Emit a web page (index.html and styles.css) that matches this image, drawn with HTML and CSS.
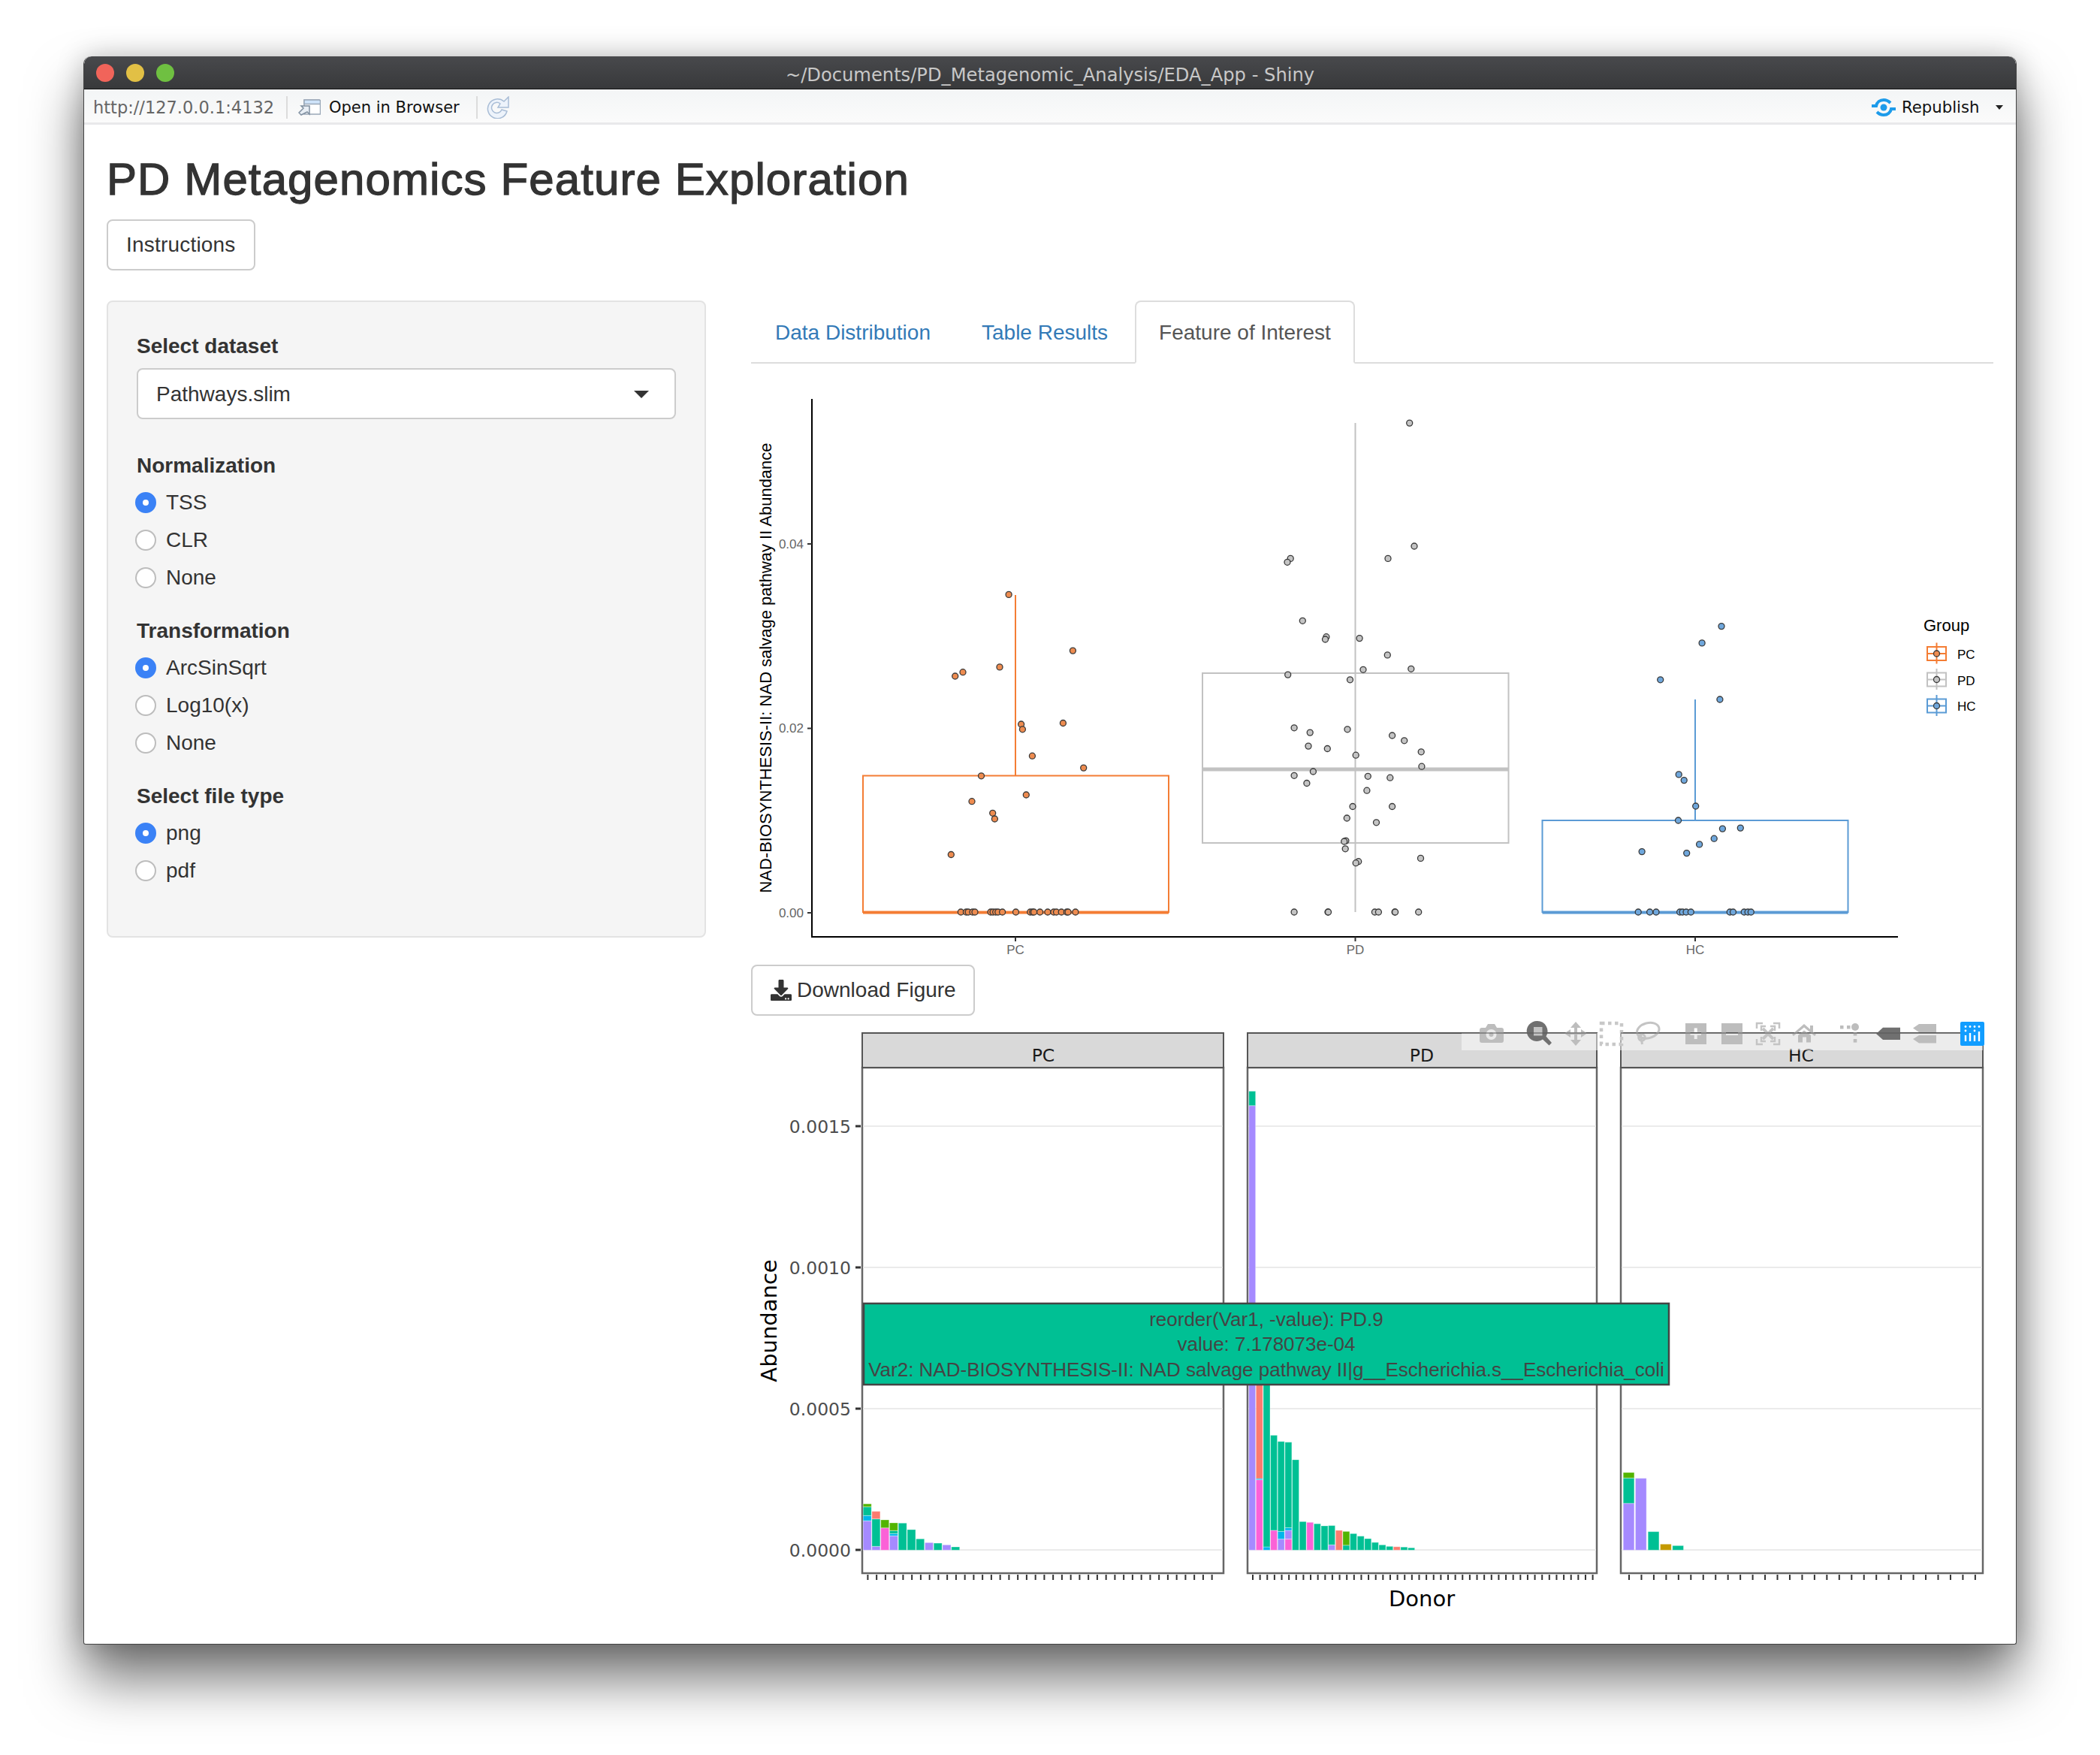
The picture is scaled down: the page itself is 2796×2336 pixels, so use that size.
FILE: index.html
```html
<!DOCTYPE html>
<html lang="en">
<head>
<meta charset="utf-8">
<title>PD Metagenomics Feature Exploration</title>
<link rel="stylesheet" href="styles.css">
</head>
<body>
<div class="window">
  <header class="titlebar">
    <div class="lights"><span class="light red"></span><span class="light yellow"></span><span class="light green"></span></div>
    <div class="wintitle">~/Documents/PD_Metagenomic_Analysis/EDA_App - Shiny</div>
  </header>
  <nav class="toolbar">
    <span class="url">http://127.0.0.1:4132</span>
    <span class="sep"></span>
    <svg class="ic-open" viewBox="0 0 30 22"><path class="ic-open-doc" d="M8 1h20a1.500 1.500 0 0 1 1.500 1.500V20H8z"/><path class="ic-open-top" d="M8 1h20a1.500 1.500 0 0 1 1.500 1.500V6.500H8z"/><path class="ic-open-arrow" d="M4 21L1 18l6-6-3-3h11v11l-3-3z"/></svg>
    <span class="openb">Open in Browser</span>
    <span class="sep"></span>
    <svg class="ic-refresh" viewBox="0 0 30 30"><path class="ic-refresh-p" d="M23 7A13 13 0 1 0 27 20L20 18A7 7 0 1 1 18 10L15 15H29V1Z"/></svg>
    <span class="spacer"></span>
    <svg class="ic-pub" viewBox="0 0 32 24"><circle class="ic-pub-dot" cx="16" cy="12" r="4.500"/><path class="ic-pub-line" d="M0 10h6c1-5 5-8 10-8 4 0 7 2 9 4"/><path class="ic-pub-line" d="M32 14h-6c-1 5-5 8-10 8-4 0-7-2-9-4"/></svg>
    <span class="republish">Republish</span>
    <span class="pubcaret"></span>
  </nav>

  <main class="app">
    <h1 class="apptitle">PD Metagenomics Feature Exploration</h1>
    <button class="btn" type="button">Instructions</button>
    <div class="columns">
      <aside class="well">
        <div class="group group-select">
          <div class="label">Select dataset</div>
          <div class="select"><span>Pathways.slim</span><span class="caret"></span></div>
        </div>
        <div class="group">
          <div class="label">Normalization</div>
          <label class="radio"><input type="radio" name="norm" checked><span>TSS</span></label>
          <label class="radio"><input type="radio" name="norm"><span>CLR</span></label>
          <label class="radio"><input type="radio" name="norm"><span>None</span></label>
        </div>
        <div class="group">
          <div class="label">Transformation</div>
          <label class="radio"><input type="radio" name="trans" checked><span>ArcSinSqrt</span></label>
          <label class="radio"><input type="radio" name="trans"><span>Log10(x)</span></label>
          <label class="radio"><input type="radio" name="trans"><span>None</span></label>
        </div>
        <div class="group group-last">
          <div class="label">Select file type</div>
          <label class="radio"><input type="radio" name="ft" checked><span>png</span></label>
          <label class="radio"><input type="radio" name="ft"><span>pdf</span></label>
        </div>
      </aside>

      <section class="content">
        <ul class="tabs">
          <li class="tab"><a>Data Distribution</a></li>
          <li class="tab"><a>Table Results</a></li>
          <li class="tab active"><a>Feature of Interest</a></li>
        </ul>

        <svg class="plot1" viewBox="1000 484 1656 800">
          <text class="p1-title" transform="translate(1027 889) rotate(-90)" text-anchor="middle">NAD-BIOSYNTHESIS-II: NAD salvage pathway II Abundance</text>
          <g class="p1-tl" text-anchor="end">
            <text x="1070" y="730">0.04</text>
            <text x="1070" y="975">0.02</text>
            <text x="1070" y="1221">0.00</text>
          </g>
          <g class="p1-tl" text-anchor="middle">
            <text x="1352" y="1270">PC</text>
            <text x="1804.500" y="1270">PD</text>
            <text x="2257" y="1270">HC</text>
          </g>
          <path class="p1-axis" d="M1081 531V1247H2527"/>
          <path class="p1-tick" d="M1075 724h6M1075 969.500h6M1075 1215h6M1352 1247v6M1804.500 1247v6M2257 1247v6"/>

          <g class="box-pc">
            <path class="whisk" d="M1352 792V1032"/>
            <rect class="bx" x="1149" y="1032.500" width="407" height="181.500"/>
            <path class="med" d="M1149 1214.500H1556"/>
          </g>
          <g class="pts-pc">
            <circle cx="1343.100" cy="791.400" r="4"/><circle cx="1428.400" cy="866.100" r="4"/><circle cx="1282" cy="894.700" r="4"/><circle cx="1271.700" cy="900" r="4"/><circle cx="1331" cy="887.900" r="4"/><circle cx="1359.600" cy="964" r="4"/><circle cx="1361.400" cy="970.800" r="4"/><circle cx="1415.400" cy="962.500" r="4"/><circle cx="1374.400" cy="1006.200" r="4"/><circle cx="1442.700" cy="1022.100" r="4"/><circle cx="1306.500" cy="1032.800" r="4"/><circle cx="1366.300" cy="1058" r="4"/><circle cx="1294" cy="1066.700" r="4"/><circle cx="1321.700" cy="1082.300" r="4"/><circle cx="1324.400" cy="1090" r="4"/><circle cx="1266.300" cy="1137.500" r="4"/>
            <circle cx="1279.300" cy="1214" r="4"/><circle cx="1286.400" cy="1214" r="4"/><circle cx="1289.100" cy="1214" r="4"/><circle cx="1294.900" cy="1214" r="4"/><circle cx="1298" cy="1214" r="4"/><circle cx="1319" cy="1214" r="4"/><circle cx="1322.100" cy="1214" r="4"/><circle cx="1325.700" cy="1214" r="4"/><circle cx="1328.800" cy="1214" r="4"/><circle cx="1334.600" cy="1214" r="4"/><circle cx="1352.500" cy="1214" r="4"/><circle cx="1371.700" cy="1214" r="4"/><circle cx="1374.800" cy="1214" r="4"/><circle cx="1376.600" cy="1214" r="4"/><circle cx="1384.600" cy="1214" r="4"/><circle cx="1394.900" cy="1214" r="4"/><circle cx="1402.900" cy="1214" r="4"/><circle cx="1406.500" cy="1214" r="4"/><circle cx="1413.200" cy="1214" r="4"/><circle cx="1420.300" cy="1214" r="4"/><circle cx="1422.100" cy="1214" r="4"/><circle cx="1431.900" cy="1214" r="4"/>
          </g>

          <g class="box-pd">
            <path class="whisk" d="M1804.500 563V1214"/>
            <rect class="bx bx-pd" x="1601" y="896" width="407.500" height="226"/>
            <path class="med med-pd" d="M1601 1024H2008.500"/>
          </g>
          <g class="pts-pd">
            <circle cx="1876.700" cy="563.100" r="4"/><circle cx="1883" cy="727" r="4"/><circle cx="1848" cy="743.400" r="4"/><circle cx="1718.200" cy="743.400" r="4"/><circle cx="1714" cy="748.300" r="4"/><circle cx="1734.300" cy="826.300" r="4"/><circle cx="1765.900" cy="847.700" r="4"/><circle cx="1764.500" cy="851" r="4"/><circle cx="1810.100" cy="849.600" r="4"/><circle cx="1847.300" cy="871.900" r="4"/><circle cx="1815" cy="891.300" r="4"/><circle cx="1878.800" cy="890.300" r="4"/><circle cx="1714.700" cy="898.100" r="4"/><circle cx="1797.500" cy="904.800" r="4"/><circle cx="1723.100" cy="968.800" r="4"/><circle cx="1744.200" cy="975.100" r="4"/><circle cx="1794" cy="970.800" r="4"/><circle cx="1853.600" cy="979" r="4"/><circle cx="1869.700" cy="985.800" r="4"/><circle cx="1892.200" cy="1000.800" r="4"/><circle cx="1742" cy="993.100" r="4"/><circle cx="1767.300" cy="996.500" r="4"/><circle cx="1805.200" cy="1005.200" r="4"/><circle cx="1892.900" cy="1020.200" r="4"/><circle cx="1748.400" cy="1027" r="4"/><circle cx="1723.100" cy="1032.300" r="4"/><circle cx="1821.300" cy="1033.300" r="4"/><circle cx="1850.800" cy="1035.200" r="4"/><circle cx="1739.900" cy="1042.500" r="4"/><circle cx="1819.900" cy="1052.200" r="4"/><circle cx="1801" cy="1073.500" r="4"/><circle cx="1853.600" cy="1073.500" r="4"/><circle cx="1793.300" cy="1089" r="4"/><circle cx="1832.500" cy="1094.800" r="4"/><circle cx="1791.900" cy="1119.100" r="4"/><circle cx="1789.700" cy="1120" r="4"/><circle cx="1791.200" cy="1129.800" r="4"/><circle cx="1808.700" cy="1146.700" r="4"/><circle cx="1805.200" cy="1148.700" r="4"/><circle cx="1891.500" cy="1142.400" r="4"/>
            <circle cx="1723.100" cy="1214" r="4"/><circle cx="1768" cy="1214" r="4"/><circle cx="1768.500" cy="1214" r="4"/><circle cx="1830.400" cy="1214" r="4"/><circle cx="1835.400" cy="1214" r="4"/><circle cx="1857.100" cy="1214" r="4"/><circle cx="1857.600" cy="1214" r="4"/><circle cx="1888.700" cy="1214" r="4"/>
          </g>

          <g class="box-hc">
            <path class="whisk whisk-hc" d="M2257 931V1092"/>
            <rect class="bx" x="2053.500" y="1092" width="407" height="122"/>
            <path class="med" d="M2053.500 1214.500H2460.500"/>
          </g>
          <g class="pts-hc">
            <circle cx="2292" cy="833.600" r="4"/><circle cx="2266.100" cy="855.900" r="4"/><circle cx="2210.700" cy="904.800" r="4"/><circle cx="2289.900" cy="931" r="4"/><circle cx="2235.200" cy="1030.900" r="4"/><circle cx="2242.200" cy="1038.600" r="4"/><circle cx="2257.700" cy="1073" r="4"/><circle cx="2234.500" cy="1092" r="4"/><circle cx="2317.300" cy="1102.100" r="4"/><circle cx="2293.400" cy="1103.100" r="4"/><circle cx="2282.200" cy="1116.200" r="4"/><circle cx="2262.600" cy="1123.900" r="4"/><circle cx="2186.100" cy="1133.600" r="4"/><circle cx="2245.700" cy="1135.600" r="4"/>
            <circle cx="2181.200" cy="1214" r="4"/><circle cx="2196.600" cy="1214" r="4"/><circle cx="2205" cy="1214" r="4"/><circle cx="2236.600" cy="1214" r="4"/><circle cx="2240.100" cy="1214" r="4"/><circle cx="2245" cy="1214" r="4"/><circle cx="2251.300" cy="1214" r="4"/><circle cx="2303.200" cy="1214" r="4"/><circle cx="2307.500" cy="1214" r="4"/><circle cx="2322.200" cy="1214" r="4"/><circle cx="2327.100" cy="1214" r="4"/><circle cx="2331.300" cy="1214" r="4"/>
          </g>

          <text class="lg-title" x="2561" y="840">Group</text>
          <g class="box-pc lg">
            <path class="whisk" d="M2578.500 855.500V883.500"/><rect class="bx" x="2566" y="861" width="25" height="18"/><path class="whisk" d="M2566 870H2591"/>
          </g>
          <circle class="lg-pc" cx="2578.500" cy="870" r="4"/>
          <g class="box-pd lg">
            <path class="whisk" d="M2578.500 890V918"/><rect class="bx" x="2566" y="895.500" width="25" height="18"/><path class="whisk" d="M2566 904.500H2591"/>
          </g>
          <circle class="lg-pd" cx="2578.500" cy="904.500" r="4"/>
          <g class="box-hc lg">
            <path class="whisk" d="M2578.500 925V953"/><rect class="bx" x="2566" y="930.500" width="25" height="18"/><path class="whisk" d="M2566 939.500H2591"/>
          </g>
          <circle class="lg-hc" cx="2578.500" cy="939.500" r="4"/>
          <g class="lg-label">
            <text x="2606" y="877">PC</text>
            <text x="2606" y="911.500">PD</text>
            <text x="2606" y="946">HC</text>
          </g>
        </svg>

        <button class="btn btn-dl" type="button">
          <svg class="dl-icon" viewBox="0 0 512 512"><path d="M216 0h80c13.300 0 24 10.700 24 24v168h87.700c17.800 0 26.700 21.500 14.100 34.100L269.700 378.300c-7.500 7.500-19.800 7.500-27.300 0L90.100 226.100c-12.600-12.600-3.700-34.100 14.100-34.100H192V24c0-13.300 10.700-24 24-24zm296 376v112c0 13.300-10.700 24-24 24H24c-13.300 0-24-10.700-24-24V376c0-13.300 10.700-24 24-24h146.700l49 49c20.100 20.100 52.500 20.100 72.600 0l49-49H488c13.300 0 24 10.700 24 24zm-124 88c0-11-9-20-20-20s-20 9-20 20 9 20 20 20 20-9 20-20zm64 0c0-11-9-20-20-20s-20 9-20 20 9 20 20 20 20-9 20-20z"/></svg>
          <span>Download Figure</span>
        </button>

        <svg class="plot2" viewBox="1000 1352 1656 810">
          <!-- panels -->
          <g class="panel">
            <rect x="1148" y="1421" width="481" height="673"/>
            <rect x="1661" y="1421" width="465" height="673"/>
            <rect x="2158" y="1421" width="482" height="673"/>
          </g>
          <path class="grid" d="M1149 1499H1628M1149 1687H1628M1149 1875H1628M1149 2063H1628M1662 1499H2125M1662 1687H2125M1662 1875H2125M1662 2063H2125M2159 1499H2639M2159 1687H2639M2159 1875H2639M2159 2063H2639"/>

          <!-- PC bars -->
          <g class="bars">
            <rect class="c-pu" x="1149.200" y="2024.300" width="11" height="39"/><rect class="c-cy" x="1149.200" y="2017.300" width="11" height="7"/><rect class="c-gr" x="1149.200" y="2005.700" width="11" height="11.600"/><rect class="c-li" x="1149.200" y="2001.700" width="11" height="4"/>
            <rect class="c-pu" x="1160.900" y="2058.300" width="11" height="5"/><rect class="c-gr" x="1160.900" y="2021.700" width="11" height="36.600"/><rect class="c-sa" x="1160.900" y="2011.700" width="11" height="10"/>
            <rect class="c-pi" x="1172.700" y="2033.700" width="11" height="29.600"/><rect class="c-li" x="1172.700" y="2023" width="11" height="10.700"/>
            <rect class="c-pu" x="1184.400" y="2044.300" width="11" height="19"/><rect class="c-cy" x="1184.400" y="2041.300" width="11" height="3"/><rect class="c-gr" x="1184.400" y="2037.300" width="11" height="4"/><rect class="c-li" x="1184.400" y="2027" width="11" height="10.300"/>
            <rect class="c-gr" x="1196.200" y="2027.300" width="11" height="36"/>
            <rect class="c-gr" x="1208" y="2036" width="11" height="27.300"/>
            <rect class="c-gr" x="1219.700" y="2048.300" width="11" height="15"/>
            <rect class="c-pu" x="1231.500" y="2053.300" width="11" height="10"/>
            <rect class="c-gr" x="1243.200" y="2054" width="11" height="9.300"/>
            <rect class="c-pu" x="1255" y="2056.300" width="11" height="7"/>
            <rect class="c-gr" x="1266.700" y="2059" width="11" height="4.300"/>
          </g>
          <!-- PD bars -->
          <g class="bars">
            <rect class="c-pu" x="1662.700" y="1471.700" width="9" height="591.600"/><rect class="c-gr" x="1662.700" y="1452.400" width="9" height="19.300"/>
            <rect class="c-pi" x="1672.300" y="1969.600" width="9" height="93.700"/><rect class="c-cy" x="1672.300" y="1968" width="9" height="1.600"/><rect class="c-sa" x="1672.300" y="1800" width="9" height="168"/>
            <rect class="c-cy" x="1682" y="2059" width="9" height="4.300"/><rect class="c-gr" x="1682" y="1793" width="9" height="266"/>
            <rect class="c-pi" x="1691.600" y="2037" width="9" height="26.300"/><rect class="c-gr" x="1691.600" y="1910.400" width="9" height="126.600"/>
            <rect class="c-pu" x="1701.200" y="2048.600" width="9" height="14.700"/><rect class="c-cy" x="1701.200" y="2038.400" width="9" height="10.200"/><rect class="c-gr" x="1701.200" y="1918.700" width="9" height="119.700"/>
            <rect class="c-pi" x="1710.900" y="2048.600" width="9" height="14.700"/><rect class="c-pu" x="1710.900" y="2037" width="9" height="11.600"/><rect class="c-cy" x="1710.900" y="2033.500" width="9" height="3.500"/><rect class="c-gr" x="1710.900" y="1919.600" width="9" height="113.900"/>
            <rect class="c-gr" x="1720.500" y="1943" width="9" height="120.300"/>
            <rect class="c-gr" x="1730.100" y="2025.300" width="9" height="38"/>
            <rect class="c-pi" x="1739.700" y="2026.300" width="9" height="37"/>
            <rect class="c-gr" x="1749.400" y="2028.200" width="9" height="35.100"/>
            <rect class="c-gr" x="1759" y="2031" width="9" height="32.300"/>
            <rect class="c-pu" x="1768.600" y="2056.300" width="9" height="7"/><rect class="c-gr" x="1768.600" y="2030.600" width="9" height="25.700"/>
            <rect class="c-sa" x="1778.300" y="2037" width="9" height="26.300"/>
            <rect class="c-gr" x="1787.900" y="2056.800" width="9" height="6.500"/><rect class="c-li" x="1787.900" y="2038.400" width="9" height="18.400"/>
            <rect class="c-gr" x="1797.500" y="2041.300" width="9" height="22"/>
            <rect class="c-gr" x="1807.200" y="2044.700" width="9" height="18.600"/>
            <rect class="c-gr" x="1816.800" y="2048" width="9" height="15.300"/>
            <rect class="c-gr" x="1826.400" y="2053" width="9" height="10.300"/>
            <rect class="c-gr" x="1836" y="2056.300" width="9" height="7"/>
            <rect class="c-gr" x="1845.700" y="2058.300" width="9" height="5"/>
            <rect class="c-sa" x="1855.300" y="2058.800" width="9" height="4.500"/>
            <rect class="c-gr" x="1864.900" y="2059.200" width="9" height="4.100"/>
            <rect class="c-gr" x="1874.600" y="2060.200" width="9" height="3.100"/>
          </g>
          <!-- HC bars -->
          <g class="bars">
            <rect class="c-pu" x="2161.200" y="2001" width="14.700" height="62.300"/><rect class="c-gr" x="2161.200" y="1967.300" width="14.700" height="33.700"/><rect class="c-li" x="2161.200" y="1960" width="14.700" height="7.300"/>
            <rect class="c-pu" x="2177.400" y="1967.700" width="14.700" height="95.600"/>
            <rect class="c-gr" x="2194.200" y="2038.700" width="14.700" height="24.600"/>
            <rect class="c-go" x="2210.500" y="2055.300" width="14.700" height="8"/>
            <rect class="c-gr" x="2226.800" y="2057.300" width="14.700" height="6"/>
          </g>

          <!-- strips -->
          <g class="strip">
            <rect x="1148" y="1375" width="481" height="46"/>
            <rect x="1661" y="1375" width="465" height="46"/>
            <rect x="2158" y="1375" width="482" height="46"/>
          </g>
          <g class="strip-text" text-anchor="middle">
            <text x="1389" y="1413">PC</text>
            <text x="1893" y="1413">PD</text>
            <text x="2398" y="1413">HC</text>
          </g>

          <!-- axes -->
          <g class="p2-tl" text-anchor="end">
            <text x="1133" y="1507.500">0.0015</text>
            <text x="1133" y="1695.500">0.0010</text>
            <text x="1133" y="1883.500">0.0005</text>
            <text x="1133" y="2072">0.0000</text>
          </g>
          <path class="p2-ytick" d="M1139 1499h7M1139 1687h7M1139 1875h7M1139 2063h7"/>
          <path class="p2-xtick t-pc" d="M1154.400 2099.500H1624"/>
          <path class="p2-xtick t-pd" d="M1667 2099.500H2122"/>
          <path class="p2-xtick t-hc" d="M2168 2099.500H2631"/>
          <text class="p2-title" transform="translate(1034 1758) rotate(-90)" text-anchor="middle">Abundance</text>
          <text class="p2-title" x="1893" y="2138" text-anchor="middle">Donor</text>

          <!-- hover label -->
          <rect class="hover-box" x="1150" y="1735" width="1072" height="108"/>
          <g class="hover-text" text-anchor="middle">
            <text x="1686" y="1765">reorder(Var1, -value): PD.9</text>
            <text x="1686" y="1798">value: 7.178073e-04</text>
            <text x="1686" y="1832">Var2: NAD-BIOSYNTHESIS-II: NAD salvage pathway II|g__Escherichia.s__Escherichia_coli</text>
          </g>

          <!-- modebar -->
          <rect class="mb-band" x="1946" y="1375" width="694" height="23"/>
          <g class="mb-l">
            <path d="M1973 1368h5l3-5h9l3 5h6a3 3 0 0 1 3 3v14a3 3 0 0 1-3 3h-26a3 3 0 0 1-3-3v-14a3 3 0 0 1 3-3z"/>
            <path d="M2098 1360l7 8h-5v6h5v-4l8 5.500-8 5.500v-4h-5v7h5l-7 8-7-8h5v-7h-5v4l-8-5.500 8-5.500v4h5v-6h-5z"/>
            <path fill-rule="evenodd" d="M2244 1362h28v28h-28zM2255.700 1368.500v5.200h-5.200v4h5.200v5.300h4v-5.300h5.300v-4h-5.300v-5.200z"/>
            <path fill-rule="evenodd" d="M2292 1362h28v28h-28zM2298 1374v4h16v-4z"/>
            <path d="M2402 1363l8 7v-5h4v8.500l4 3.500-2 2-14-11.500-14 11.500-2-2z"/>
            <path fill-rule="evenodd" d="M2394 1378l8-6.500 9 6.500v9.500h-6v-7h-5v7h-6z"/>
            <rect x="2450" y="1365" width="4.500" height="4.500"/>
            <rect x="2459" y="1365" width="4.500" height="4.500"/>
            <circle cx="2470" cy="1367" r="5"/>
            <rect x="2467.700" y="1374" width="4.600" height="4.600"/>
            <rect x="2467.700" y="1383" width="4.600" height="4.600"/>
            <path d="M2547 1368.500l8-5.500h23v11h-23zM2547 1383l8-5h23v10.500h-23z"/>
          </g>
          <circle class="mb-lens" cx="1985.500" cy="1377" r="7"/>
          <circle class="mb-lens2" cx="1985.500" cy="1377" r="3"/>
          <rect class="mb-dash" x="2132" y="1362" width="27" height="28"/>
          <g class="mb-stroke">
            <ellipse cx="2194.300" cy="1371.700" rx="15" ry="10" transform="rotate(-15 2194.300 1371.700)"/>
            <circle cx="2186" cy="1381" r="4.300"/>
            <path d="M2184 1376l2.500 14"/>
            <path class="mb-thin" d="M2339 1369v-7h8M2361 1362h8v7M2369 1383v7h-8M2347 1390h-8v-7"/>
            <path class="mb-thick" d="M2347 1369l14 14M2361 1369l-14 14"/>
            <path class="mb-thin" d="M2345 1372v-6h6M2357 1366h6v6M2363 1380v6h-6M2351 1386h-6v-6"/>
          </g>
          <g class="mb-d">
            <path fill-rule="evenodd" d="M2047 1359a13.500 13.500 0 0 1 11.500 20.500l7.500 8.500-3.500 3.500-8.500-8a13.500 13.500 0 1 1-7-24.500z"/>
            <path d="M2498 1376l9-8.300h23v16.300h-23z"/>
          </g>
          <rect class="mb-zoombox" x="2042" y="1367" width="11.500" height="11.500"/>
          <path class="mb-line" d="M1946 1375H2126M2158 1375H2640"/>
          <rect class="mb-logo" x="2610" y="1360" width="32" height="32" rx="2"/>
          <g class="mb-logo-w">
            <rect x="2615.800" y="1378" width="2.400" height="8"/><rect x="2621.800" y="1375" width="2.400" height="11"/><rect x="2627.800" y="1378" width="2.400" height="8"/><rect x="2633.800" y="1373" width="2.400" height="13"/>
            <circle cx="2617" cy="1366.500" r="1.400"/><circle cx="2623" cy="1366.500" r="1.400"/><circle cx="2629" cy="1366.500" r="1.400"/><circle cx="2635" cy="1366.500" r="1.400"/>
            <circle cx="2617" cy="1372" r="1.400"/><circle cx="2629" cy="1372" r="1.400"/>
          </g>
        </svg>
      </section>
    </div>
  </main>
</div>
</body>
</html>
```

FILE: styles.css
```css
* { box-sizing: border-box; }
html, body { margin: 0; padding: 0; background: #fff; overflow: hidden; }
body { height: 2336px; font-family: "Liberation Sans", Arial, sans-serif; font-size: 28px; color: #333; }

.window {
  width: 2574px;
  height: 2114px;
  margin: 75px auto 0;
  background: #fff;
  border-radius: 10px 10px 3px 3px;
  border: 1px solid #444;
  border-top: none;
  box-shadow: 0 46px 72px rgba(0,0,0,.55), 0 0 36px rgba(0,0,0,.22);
  overflow: hidden;
}

.titlebar {
  height: 44px;
  display: flex;
  align-items: center;
  position: relative;
  background: linear-gradient(#48494c, #38393b);
  border-bottom: 1px solid #111;
  border-radius: 10px 10px 0 0;
}
.lights { display: flex; gap: 16px; padding-left: 16px; }
.light { width: 24px; height: 24px; border-radius: 50%; }
.red { background: #f1645a; }
.yellow { background: #e2c045; }
.green { background: #6fc041; }
.wintitle {
  position: absolute;
  left: 0; right: 0; top: 11px;
  text-align: center;
  font-family: "DejaVu Sans", sans-serif;
  font-size: 24.200px;
  line-height: 28px;
  color: #c8c8c8;
}

.toolbar {
  height: 47px;
  display: flex;
  align-items: center;
  padding: 3px 17px 0 12px;
  background: linear-gradient(#f3f5f6, #fbfbfb);
  border-bottom: 3px solid #e9e9eb;
  font-family: "DejaVu Sans", sans-serif;
  font-size: 21px;
}
.url { color: #666; width: 257px; white-space: nowrap; font-size: 22.500px; }
.sep { width: 2px; height: 30px; background: #dcdcdc; }
.ic-open { width: 30px; height: 22px; margin: 0 11px 0 14px; }
.ic-open-doc { fill: #fff; stroke: #9aa8b8; stroke-width: 1.5; }
.ic-open-top { fill: #cfe4fa; stroke: #9aa8b8; stroke-width: 1.5; }
.ic-open-arrow { fill: #e8eef5; stroke: #7f8fa0; stroke-width: 1.5; }
.openb { color: #111; width: 196px; white-space: nowrap; }
.ic-refresh { width: 30px; height: 30px; margin-left: 12px; }
.ic-refresh-p { fill: #edf3fb; stroke: #a9bdd6; stroke-width: 1.500; }
.spacer { flex: 1; }
.ic-pub { width: 32px; height: 24px; margin-right: 8px; }
.ic-pub-dot { fill: #1d9bea; }
.ic-pub-line { fill: none; stroke: #1d9bea; stroke-width: 4; }
.republish { color: #111; width: 125px; white-space: nowrap; font-size: 21.200px; }
.pubcaret { width: 0; height: 0; border-left: 5px solid transparent; border-right: 5px solid transparent; border-top: 6px solid #222; }

.app { padding: 40px 30px 0; }
.apptitle {
  margin: 0 0 20px;
  font-size: 60px;
  font-weight: 500;
  line-height: 66px;
  color: #333;
  letter-spacing: 1.100px;
  -webkit-text-stroke: 1.300px #333;
}
.btn {
  display: inline-flex;
  align-items: center;
  height: 68px;
  padding: 0 24px;
  background: #fff;
  border: 2px solid #ccc;
  border-radius: 8px;
  font: inherit;
  color: #333;
  line-height: 40px;
  letter-spacing: .2px;
}
.columns { display: flex; gap: 60px; margin-top: 40px; align-items: flex-start; }

.well {
  width: 798px;
  flex: none;
  padding: 38px 38px 67px;
  background: #f5f5f5;
  border: 2px solid #e3e3e3;
  border-radius: 8px;
}
.group { margin-bottom: 30px; }
.group-select { margin-bottom: 41px; }
.group-last { margin-bottom: 0; }
.label { font-weight: 700; height: 40px; line-height: 42px; margin-bottom: 10px; }
.select {
  height: 68px;
  display: flex;
  align-items: center;
  justify-content: space-between;
  padding: 1px 34px 0 24px;
  background: #fff;
  border: 2px solid #ccc;
  border-radius: 8px;
}
.caret { width: 0; height: 0; border-left: 10px solid transparent; border-right: 10px solid transparent; border-top: 10px solid #333; }
.radio { display: flex; align-items: center; gap: 13px; height: 40px; margin-bottom: 10px; margin-left: -2px; }
.radio:last-child { margin-bottom: 0; }
.radio input {
  appearance: none;
  -webkit-appearance: none;
  width: 28px;
  height: 28px;
  margin: 0;
  border-radius: 50%;
  background: #fff;
  border: 2px solid #bdbdbd;
}
.radio input:checked {
  border: 10px solid #3b82f6;
  background: #fff;
}

.content { flex: 1; min-width: 0; }
.tabs { display: flex; list-style: none; margin: 0; padding: 0; border-bottom: 2px solid #ddd; height: 84px; }
.tab { margin-right: 4px; margin-bottom: -2px; }
.tab a {
  display: block;
  padding: 21px 30px 19px;
  line-height: 40px;
  height: 84px;
  color: #337ab7;
  border: 2px solid transparent;
  border-radius: 8px 8px 0 0;
}
.tab.active a { color: #555; background: #fff; border-color: #ddd #ddd #fff; }

.plot1, .plot2 { display: block; width: 1656px; }
.plot1 { height: 800px; }
.plot2 { height: 810px; }

.p1-title { font-size: 22px; fill: #000; }
.p1-tl { font-size: 17px; fill: #666; }
.p1-axis { fill: none; stroke: #000; stroke-width: 2; }
.p1-tick { stroke: #333; stroke-width: 2; }
.bx, .whisk, .med { fill: none; }
.whisk { stroke-width: 2; }
.bx { stroke-width: 2; }
.med { stroke-width: 4; }
.med-pd { stroke-width: 5; }
.box-pc .bx, .box-pc .whisk, .box-pc .med { stroke: #f47d34; }
.box-pd .bx, .box-pd .whisk, .box-pd .med { stroke: #c2c2c2; }
.box-hc .bx, .box-hc .whisk, .box-hc .med { stroke: #5b9bd5; }
.pts-pc circle, .lg-pc { fill: #ee8c50; stroke: #3a3a3a; stroke-width: 1.300; }
.pts-pd circle, .lg-pd { fill: #c4c4c4; stroke: #3a3a3a; stroke-width: 1.300; }
.pts-hc circle, .lg-hc { fill: #6fa7dc; stroke: #3a3a3a; stroke-width: 1.300; }
.lg-title { font-size: 22px; fill: #000; }
.lg-label { font-size: 17px; fill: #000; }

.btn-dl { gap: 7px; padding: 0 23px 0 24px; letter-spacing: 0; }
.dl-icon { width: 28px; height: 28px; fill: #333; }

.panel rect { fill: #fff; stroke: #666; stroke-width: 2.500; }
.grid { fill: none; stroke: #ebebeb; stroke-width: 2; }
.bars rect { stroke: rgba(255,255,255,.35); stroke-width: 1; }
.c-pu { fill: #a58aff; }
.c-gr { fill: #00c094; }
.c-sa { fill: #fb7b6f; }
.c-pi { fill: #fb61d7; }
.c-cy { fill: #00b6eb; }
.c-li { fill: #53b400; }
.c-go { fill: #c49a00; }
.strip rect { fill: #d9d9d9; stroke: #555; stroke-width: 2; }
.strip-text { font-family: "DejaVu Sans", sans-serif; font-size: 23.500px; fill: #1a1a1a; }
.p2-tl { font-family: "DejaVu Sans", sans-serif; font-size: 23.500px; fill: #4d4d4d; }
.p2-ytick { stroke: #333; stroke-width: 3; }
.p2-xtick { fill: none; stroke: #333; stroke-width: 7; }
.t-pc { stroke-width: 7; stroke-dasharray: 2 9.750; }
.t-pd { stroke-dasharray: 2 7.630; }
.t-hc { stroke-dasharray: 2 14.460; }
.p2-title { font-family: "DejaVu Sans", sans-serif; font-size: 29px; fill: #000; }

.hover-box { fill: #00c094; stroke: #444; stroke-width: 2.500; }
.hover-text { font-size: 26px; fill: #444; }

.mb-band { fill: rgba(255,255,255,.5); }
.mb-l { fill: #bdbdbd; }
.mb-lens { fill: #eaeaea; }
.mb-lens2 { fill: #bdbdbd; }
.mb-dash { fill: none; stroke: #c8c8c8; stroke-width: 4.500; stroke-dasharray: 4.500 4.500; }
.mb-stroke { fill: none; stroke: #c4c4c4; stroke-width: 3; }
.mb-stroke .mb-thin { stroke-width: 2.500; }
.mb-stroke .mb-thick { stroke-width: 4; }
.mb-d { fill: #707070; }
.mb-zoombox { fill: #c4c4c4; }
.mb-line { fill: none; stroke: rgba(90,90,90,.55); stroke-width: 2; }
.mb-logo { fill: #119dff; }
.mb-logo-w { fill: #fff; }
```
